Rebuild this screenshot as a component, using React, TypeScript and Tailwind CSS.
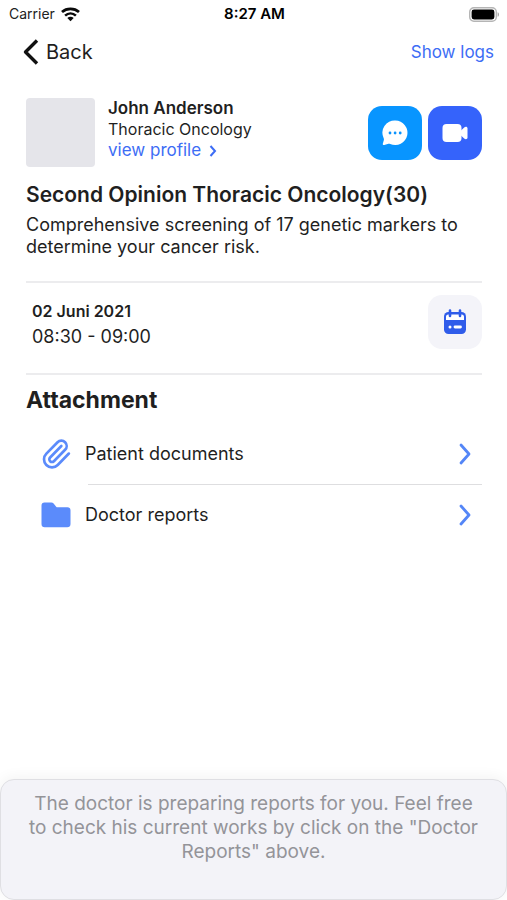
import type { ReactNode } from "react";
import { Paperclip } from "lucide-react";

function WifiIcon() {
    return (
        <svg width="19" height="15" viewBox="0 0 19 15" fill="none" stroke="#0a0a0a" aria-hidden="true">
            <path d="M1 5C5.700.9 13.300.9 18 5" strokeWidth="2.8" />
            <path d="M4.100 8.600c3.200-2.900 7.600-2.900 10.800 0" strokeWidth="2.6" />
            <path d="M9.500 14.200 6.300 11c1.800-1.600 4.600-1.600 6.400 0l-3.200 3.200Z" fill="#0a0a0a" stroke="none" />
        </svg>
    );
}

function BatteryIcon() {
    return (
        <svg width="31" height="15" viewBox="0 0 31 15" aria-hidden="true">
            <rect x="0.7" y="0.7" width="26.6" height="13.6" rx="4.2" fill="#fff" stroke="#b5b5b5" strokeWidth="1.4" />
            <rect x="2.6" y="2.6" width="22.8" height="9.8" rx="2.4" fill="#000" />
            <path d="M28.600 5.200c1.900.7 1.900 3.900 0 4.600V5.200Z" fill="#a5a5a5" />
        </svg>
    );
}

function BackIcon() {
    return (
        <svg width="16" height="26" viewBox="0 0 16 26" fill="none" aria-hidden="true">
            <path d="M14 1.500 2.500 13 14 24.500" stroke="#111" strokeWidth="3.4" strokeLinejoin="round" />
        </svg>
    );
}

function ChevronIcon() {
    return (
        <svg width="12" height="22" viewBox="0 0 12 22" fill="none" aria-hidden="true">
            <path d="m2 2 8 9-8 9" stroke="#5486f7" strokeWidth="2.8" strokeLinecap="round" strokeLinejoin="round" />
        </svg>
    );
}

function SmallChevronIcon() {
    return (
        <svg width="8" height="12" viewBox="0 0 8 12" fill="none" aria-hidden="true">
            <path d="M1.500 1 6 6l-4.500 5" stroke="#3d6df5" strokeWidth="2" />
        </svg>
    );
}

function ChatIcon() {
    return (
        <svg width="26" height="26" viewBox="0 0 26 26" aria-hidden="true">
            <path d="M13.400.6a12.200 12.200 0 1 1-5.200 23.300c-.9-.3-1.600-.2-2.600.1l-3.300 1c-1 .3-1.700-.3-1.500-1.300l1-3.400c.2-.8.2-1.400-.2-2.200A12.200 12.200 0 0 1 13.400.6Z" fill="#fff" />
            <circle cx="8" cy="13" r="1.4" fill="#0b93fd" />
            <circle cx="13.1" cy="13" r="1.4" fill="#0b93fd" />
            <circle cx="18.2" cy="13" r="1.4" fill="#0b93fd" />
        </svg>
    );
}

function VideoIcon() {
    return (
        <svg width="26" height="20" viewBox="0 0 26 20" fill="#fff" aria-hidden="true">
            <rect x="0.5" y="1" width="19" height="18" rx="4" />
            <path d="M19 7.600 22.200 4.400c1.300-1.200 3.300-.8 3.300 1v9.200c0 1.800-2 2.200-3.300 1L19 12.400V7.600Z" />
        </svg>
    );
}

function CalendarIcon() {
    return (
        <svg width="24" height="26" viewBox="0 0 24 26" fill="none" aria-hidden="true">
            <rect x="1" y="3" width="22" height="22" rx="4.5" fill="#2f5cea" />
            <path d="M3 7.500A2.200 2.200 0 0 1 5.200 5.600h13.600A2.200 2.200 0 0 1 21 7.500V11H3V7.500Z" fill="#fff" />
            <path d="M7 1.500V7M17 1.500V7" stroke="#2f5cea" strokeWidth="2.6" strokeLinecap="round" />
            <circle cx="7" cy="18" r="1.5" fill="#fff" />
            <path d="M12 18h5.500" stroke="#fff" strokeWidth="2.8" strokeLinecap="round" />
        </svg>
    );
}

function FolderIcon() {
    return (
        <svg width="30" height="26" viewBox="0 0 30 26" fill="#5b8bfb" aria-hidden="true">
            <path d="M3.500.5h6.800c1 0 1.700.3 2.300 1l2.400 2.900c.5.700 1 .9 1.800.9h9.700c1.900 0 3 1.100 3 3v13.700c0 2.100-1.200 3.300-3.200 3.300H3.700c-2 0-3.200-1.200-3.200-3.300V3.500c0-1.900 1.100-3 3-3Z" />
        </svg>
    );
}

function AttachmentRow({ icon, label }: { icon: ReactNode; label: string }) {
    return (
        <button type="button" className="flex h-15 w-full items-center pr-[11px] pl-3 text-left">
            <span className="flex w-9 justify-center">{icon}</span>
            <span className="grow pl-[11px] text-lg">{label}</span>
            <ChevronIcon />
        </button>
    );
}

export default function App() {
    return (
        <div className="flex min-h-screen flex-col bg-white font-['Inter',sans-serif] text-[#1f1f1f]">
            {/* Status bar */}
            <div className="grid h-7 grid-cols-3 items-center pr-[7px] pl-[9px] text-sm text-[#222]">
                <div className="flex items-center gap-[6px]">
                    <span>Carrier</span>
                    <WifiIcon />
                </div>
                <span className="text-center text-[15px] font-semibold text-black">8:27 AM</span>
                <div className="flex justify-end">
                    <BatteryIcon />
                </div>
            </div>

            {/* Navigation */}
            <nav className="flex h-12 items-center justify-between pr-[13px] pl-[23px]">
                <button type="button" className="flex items-center gap-[7px] text-xl">
                    <BackIcon />
                    Back
                </button>
                <button type="button" className="text-[17px] leading-7 text-[#3d6df5]">Show logs</button>
            </nav>

            <main className="pt-[22px] pr-[25px] pl-[26px]">
                {/* Doctor */}
                <section className="flex items-center">
                    <div className="size-[69px] rounded-[4px] bg-[#e5e5ea]" />
                    <div className="grow self-start pl-[13px]">
                        <h2 className="text-[17px] leading-[21px] font-semibold">John Anderson</h2>
                        <p className="text-base leading-[21px]">Thoracic Oncology</p>
                        <a href="#profile" className="flex items-center gap-2 text-[17px] leading-[21px] text-[#3d6df5]">
                            view profile
                            <SmallChevronIcon />
                        </a>
                    </div>
                    <div className="flex gap-[6px]">
                        <button type="button" aria-label="Chat" className="flex size-[54px] items-center justify-center rounded-[14px] bg-[#0895ff]">
                            <ChatIcon />
                        </button>
                        <button type="button" aria-label="Video call" className="flex size-[54px] items-center justify-center rounded-[14px] bg-[#3563fb]">
                            <VideoIcon />
                        </button>
                    </div>
                </section>

                {/* Appointment */}
                <section className="border-b-2 border-[#ececee] pt-[13px] pb-[23px]">
                    <h1 className="text-[21px] leading-[30px] font-semibold">Second Opinion Thoracic Oncology(30)</h1>
                    <p className="pt-1 text-lg leading-[22px]">
                        Comprehensive screening of 17 genetic markers to determine your cancer risk.
                    </p>
                </section>

                <section className="flex items-center justify-between border-b-2 border-[#ececee] pt-[11px] pb-[23px] pl-[6px]">
                    <div className="pt-1">
                        <p className="text-base leading-[26px] font-semibold">02 Juni 2021</p>
                        <p className="text-lg leading-[26px]">08:30 - 09:00</p>
                    </div>
                    <button type="button" aria-label="Add to calendar" className="flex size-[54px] items-center justify-center rounded-[14px] bg-[#f4f4f9]">
                        <CalendarIcon />
                    </button>
                </section>

                {/* Attachments */}
                <section>
                    <h2 className="pt-[11px] pb-[10px] text-[23px] leading-[28px] font-bold">Attachment</h2>
                    <AttachmentRow
                        icon={<Paperclip size={32} strokeWidth={2} className="text-[#5b8bfb]" />}
                        label="Patient documents"
                    />
                    <hr className="ml-[62px] border-[#dedee0]" />
                    <AttachmentRow icon={<FolderIcon />} label="Doctor reports" />
                </section>
            </main>

            <footer className="mt-auto min-h-[121px] rounded-[14px] border border-[#dfdfe3] bg-[#f3f3f8] px-[26px] pt-3 text-center text-[19px] leading-6 text-[#949499] shadow-[0_-2px_14px_rgba(0,0,0,0.05)]">
                The doctor is preparing reports for you. Feel free to check his current works by click on the "Doctor Reports" above.
            </footer>
        </div>
    );
}
